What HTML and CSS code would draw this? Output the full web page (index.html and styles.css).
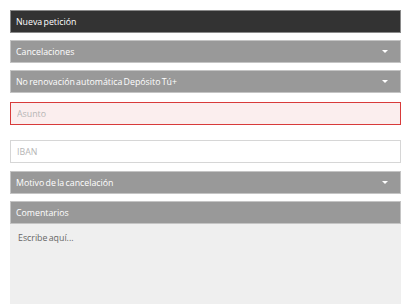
FILE: index.html
```html
<!DOCTYPE html>
<html lang="es">
<head>
  <meta charset="UTF-8" />
  <meta name="viewport" content="width=device-width, initial-scale=1.0"/>
  <title>Nueva petición</title>
  <link rel="stylesheet" href="styles.css">
</head>
<body>
  <div class="form">
    <div class="bar bar-dark">Nueva petición</div>

    <div class="bar select">
      <span>Cancelaciones</span>
      <span class="caret"></span>
    </div>

    <div class="bar select">
      <span>No renovación automática Depósito Tú+</span>
      <span class="caret"></span>
    </div>

    <input class="field field-error" type="text" placeholder="Asunto">

    <input class="field field-iban" type="text" placeholder="IBAN">

    <div class="bar select">
      <span>Motivo de la cancelación</span>
      <span class="caret"></span>
    </div>

    <div class="comments">
      <div class="bar">Comentarios</div>
      <textarea placeholder="Escribe aquí..."></textarea>
    </div>
  </div>
</body>
</html>
```

FILE: styles.css
```css
* {
  box-sizing: border-box;
  font-family: "Open Sans", "Noto Sans", sans-serif;
}

body {
  margin: 0;
  padding: 10px 0 0 10px;
  background: #ffffff;
  overflow: hidden;
}

.form {
  width: 391px;
  display: flex;
  flex-direction: column;
}

.bar {
  height: 23px;
  padding: 0 5px;
  display: flex;
  align-items: center;
  justify-content: space-between;
  font-size: 8.8px;
  word-spacing: -1px;
  color: #ffffff;
  background: #999999;
  border: 1px solid #c4c4c4;
}

.bar-dark {
  background: #333333;
  border-color: #8a8a8a;
  margin-bottom: 7px;
}

.select {
  margin-bottom: 7px;
}

.caret {
  width: 0;
  height: 0;
  margin-right: 7px;
  border-left: 3px solid transparent;
  border-right: 3px solid transparent;
  border-top: 3px solid #ffffff;
}

.field {
  height: 23px;
  padding: 0 6px;
  font-size: 8.8px;
  outline: none;
}

.field::placeholder {
  color: #b5b5b5;
}

.field-error {
  margin-top: 2px;
  background: #fbeeee;
  border: 1px solid #d83a3a;
  margin-bottom: 15px;
}

.field-iban {
  background: #ffffff;
  border: 1px solid #d6d6d6;
  margin-bottom: 8px;
}

.comments textarea {
  display: block;
  width: 100%;
  height: 90px;
  padding: 8px 8px;
  font-size: 8.8px;
  word-spacing: -1px;
  color: #555555;
  background: #efefef;
  border: none;
  resize: none;
  outline: none;
}

.comments textarea::placeholder {
  color: #666666;
}
```
